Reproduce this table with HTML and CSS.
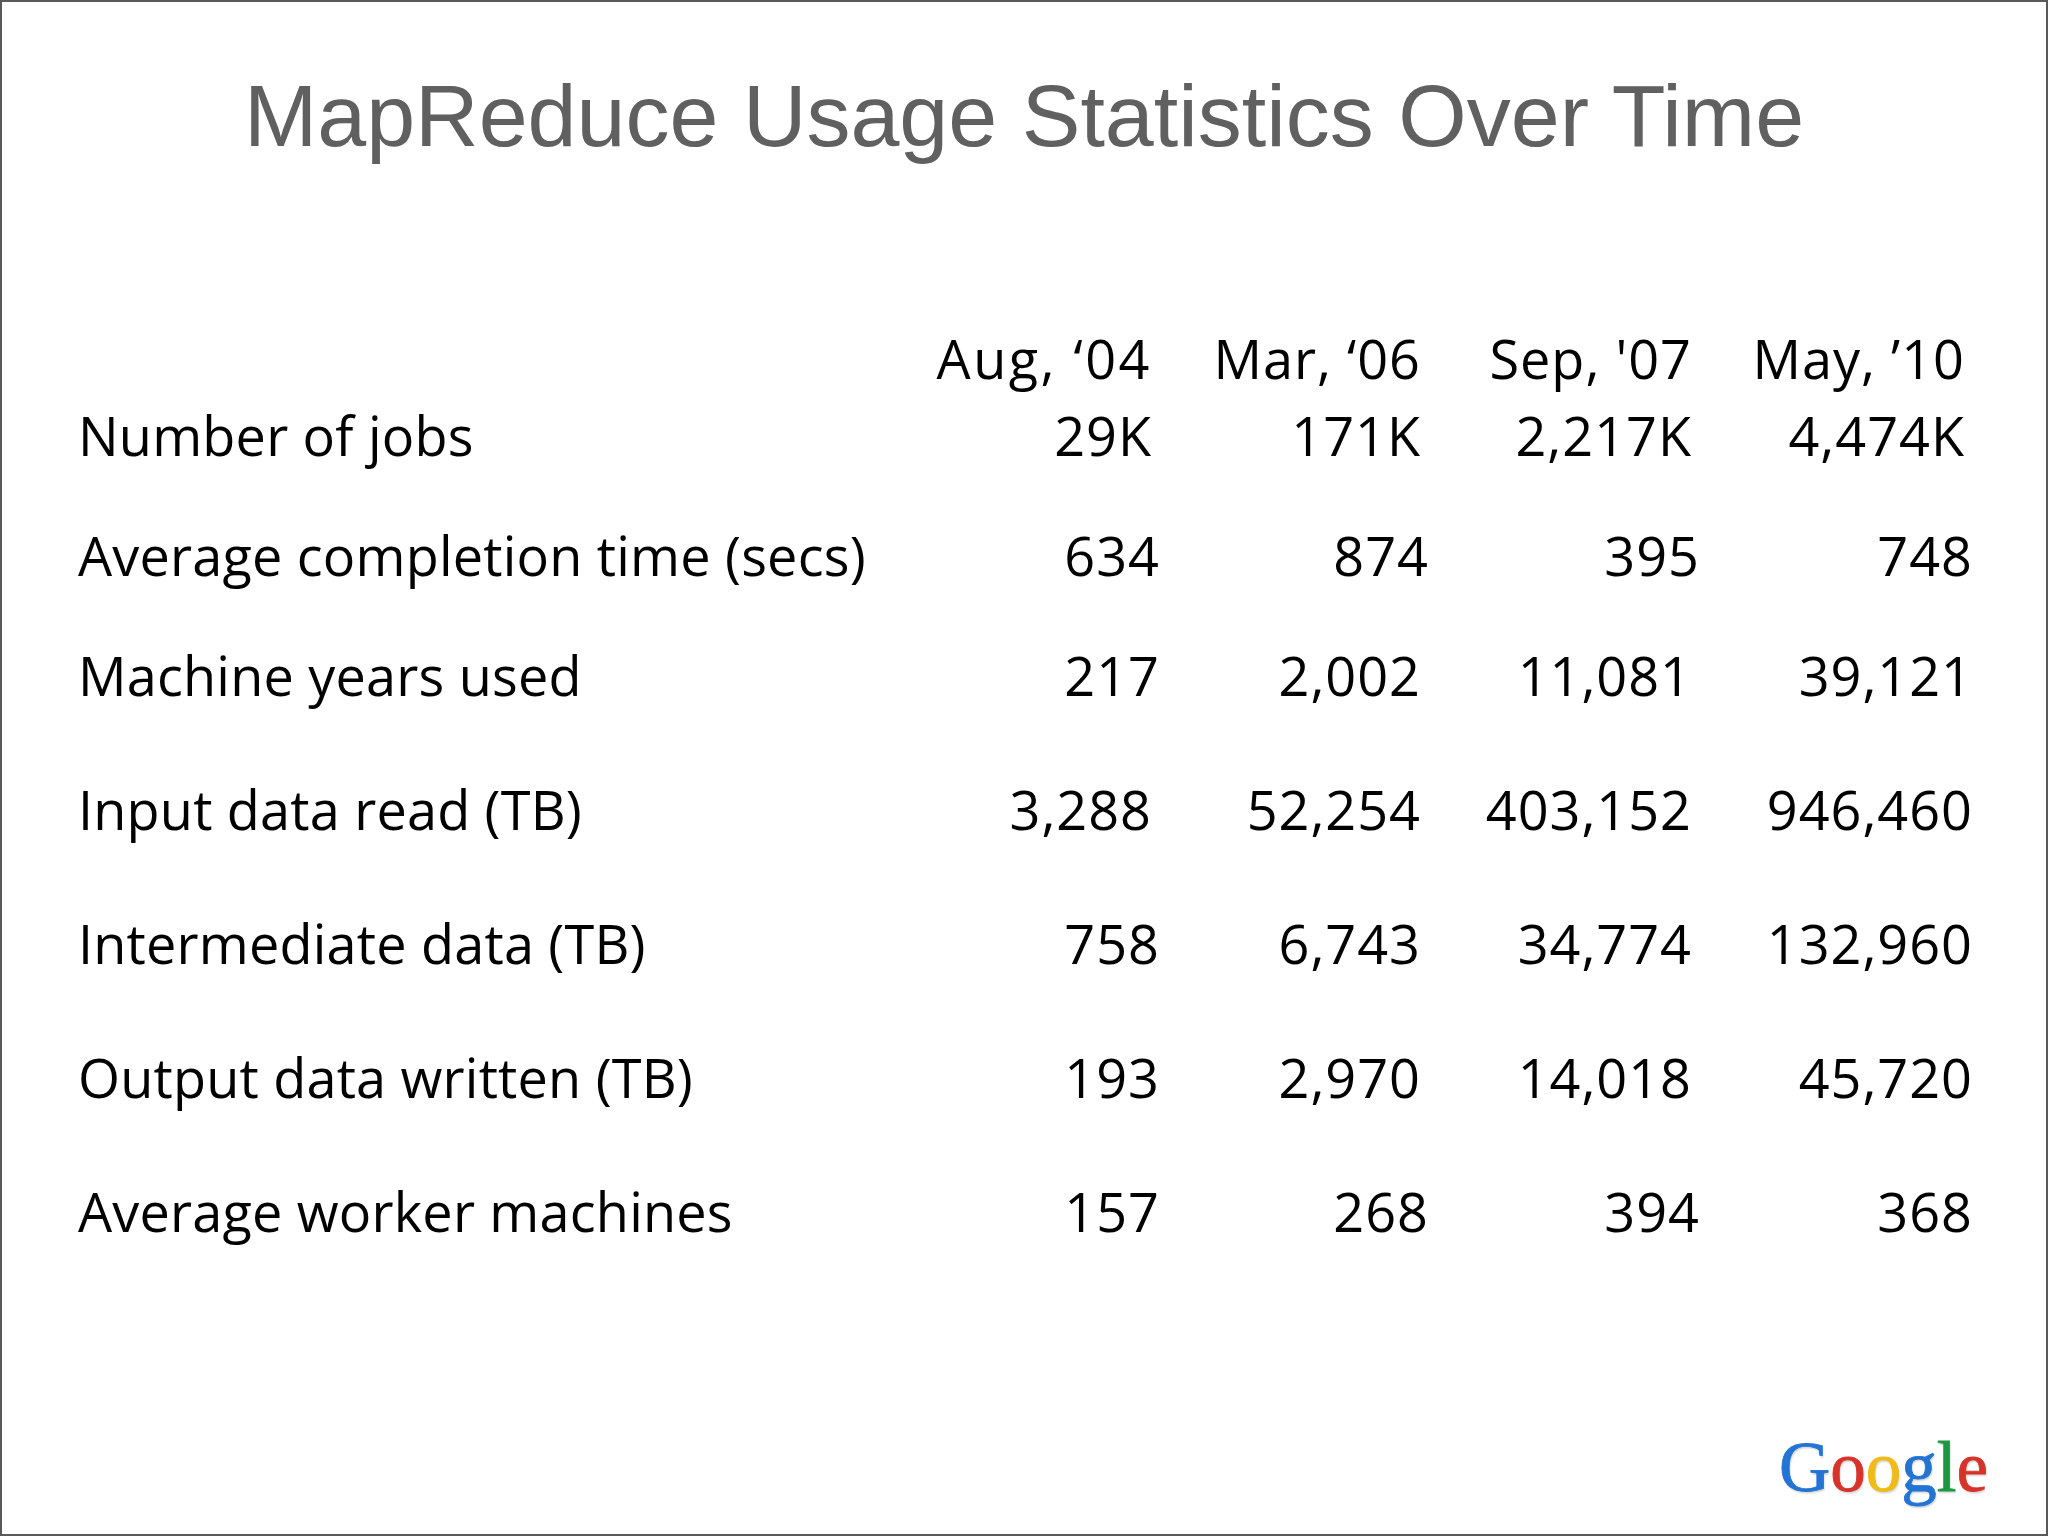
FILE: index.html
```html
<!DOCTYPE html>
<html lang="en">
<head>
<meta charset="utf-8">
<title>MapReduce Usage Statistics Over Time</title>
<link rel="stylesheet" href="styles.css">
</head>
<body>
<div class="slide">
  <h1 class="title">MapReduce Usage Statistics Over Time</h1>
  <div class="stats">
    <div class="row head">
      <div class="label"></div>
      <div class="val in wide">Aug, ‘04</div>
      <div class="val in">Mar, ‘06</div>
      <div class="val in">Sep, '07</div>
      <div class="val in">May, ’10</div>
    </div>
    <div class="row first">
      <div class="label">Number of jobs</div>
      <div class="val in">29K</div>
      <div class="val in">171K</div>
      <div class="val in">2,217K</div>
      <div class="val in">4,474K</div>
    </div>
    <div class="row">
      <div class="label">Average completion time (secs)</div>
      <div class="val">634</div>
      <div class="val">874</div>
      <div class="val">395</div>
      <div class="val">748</div>
    </div>
    <div class="row">
      <div class="label">Machine years used</div>
      <div class="val">217</div>
      <div class="val in">2,002</div>
      <div class="val in">11,081</div>
      <div class="val">39,121</div>
    </div>
    <div class="row spaced">
      <div class="label">Input data read (TB)</div>
      <div class="val in">3,288</div>
      <div class="val in">52,254</div>
      <div class="val in">403,152</div>
      <div class="val">946,460</div>
    </div>
    <div class="row spaced">
      <div class="label">Intermediate data (TB)</div>
      <div class="val">758</div>
      <div class="val in">6,743</div>
      <div class="val in">34,774</div>
      <div class="val">132,960</div>
    </div>
    <div class="row spaced">
      <div class="label">Output data written (TB)</div>
      <div class="val">193</div>
      <div class="val in">2,970</div>
      <div class="val in">14,018</div>
      <div class="val">45,720</div>
    </div>
    <div class="row spaced">
      <div class="label">Average worker machines</div>
      <div class="val">157</div>
      <div class="val">268</div>
      <div class="val">394</div>
      <div class="val">368</div>
    </div>
  </div>
  <div class="logo"><span class="blue">G</span><span class="red">o</span><span class="yellow">o</span><span class="blue">g</span><span class="green">l</span><span class="red">e</span></div>
</div>
</body>
</html>
```

FILE: styles.css
```css
html, body {
  margin: 0;
  padding: 0;
  background: #ffffff;
}

.slide {
  width: 2048px;
  height: 1536px;
  box-sizing: border-box;
  border: 2px solid #585858;
  background: #ffffff;
  display: flex;
  flex-direction: column;
  overflow: hidden;
}

.title {
  margin: 70px 0 0 0;
  font-family: "Liberation Sans", Arial, sans-serif;
  font-weight: normal;
  font-size: 88px;
  line-height: 88px;
  color: #606060;
  text-align: center;
}

.stats {
  margin-top: 168px;
  padding-left: 76px;
  display: flex;
  flex-direction: column;
  font-family: "Open Sans", "Noto Sans", sans-serif;
  font-size: 54px;
  line-height: 60px;
  color: #000000;
}

.row {
  display: grid;
  grid-template-columns: 822px 260px 269px 271px 273px;
  margin-top: 60px;
}

.row.head {
  margin-top: 0;
}

.row.first {
  margin-top: 17px;
}

.row.spaced {
  margin-top: 74px;
}

.label {
  white-space: nowrap;
  letter-spacing: 0.2px;
}

.val {
  text-align: right;
  white-space: nowrap;
  letter-spacing: 1px;
}

.val.in {
  padding-right: 8px;
}

.val.wide {
  letter-spacing: 2.5px;
}

.logo {
  margin-top: auto;
  margin-bottom: 32px;
  margin-right: 58px;
  align-self: flex-end;
  font-family: "Liberation Serif", "Times New Roman", serif;
  font-size: 71px;
  line-height: 70px;
  -webkit-text-stroke: 0.8px currentColor;
  text-shadow: 1px 2px 2px rgba(0, 0, 0, 0.18);
}

.blue { color: #2374d4; }
.red { color: #d6332a; }
.yellow { color: #f0bb1a; }
.green { color: #1b9844; }
```
